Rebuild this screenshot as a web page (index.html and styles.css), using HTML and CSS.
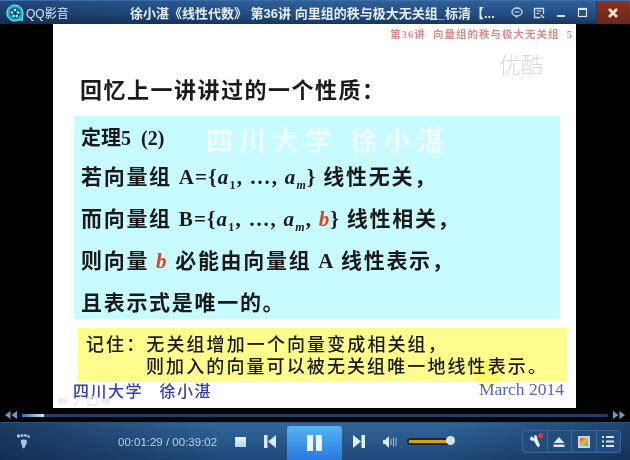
FILE: index.html
```html
<!DOCTYPE html>
<html lang="zh-CN">
<head>
  <meta charset="UTF-8">
  <title>QQ影音</title>
  <link rel="stylesheet" href="styles.css">
</head>
<body>

<div class="player">
  <div class="titlebar">
    <svg class="logo" width="18" height="18" viewBox="0 0 18 18">
      <path d="M9 1a8 8 0 0 1 8 8c0 2-.6 5-.6 7.500L13 15.800A8 8 0 1 1 9 1z" fill="#12b5d6" stroke="#8ff0f5" stroke-width="1"/>
      <circle cx="9" cy="9" r="5.500" fill="#0c4f86"/>
      <circle cx="9" cy="6" r="1.300" fill="#bff"/>
      <circle cx="6" cy="8.500" r="1.300" fill="#bff"/>
      <circle cx="12" cy="8.500" r="1.300" fill="#bff"/>
      <circle cx="7.500" cy="12" r="1.300" fill="#bff"/>
      <circle cx="10.800" cy="12" r="1.300" fill="#bff"/>
    </svg>
    <span class="app-name">QQ影音</span>
    <span class="video-title">徐小湛《线性代数》 第36讲 向里组的秩与极大无关组_标清【...</span>
    <div class="win-btns">
      <svg class="win-btn" width="22" height="22" viewBox="0 0 22 22"><ellipse cx="11" cy="10" rx="5" ry="4" fill="none" stroke="#cfe0f0" stroke-width="1.300"/><path d="M9 14l2 2.500v-2.500z" fill="#cfe0f0"/><path d="M8.500 10h5" stroke="#cfe0f0"/></svg>
      <svg class="win-btn" width="22" height="22" viewBox="0 0 22 22"><path d="M15.500 12V6.500h-9v9h6" fill="none" stroke="#cfe0f0" stroke-width="1.300"/><path d="M8.500 9h5M8.500 11.500h3" stroke="#cfe0f0"/><path d="M13 13l3 3" stroke="#cfe0f0" stroke-width="1.500"/></svg>
      <svg class="win-btn" width="22" height="22" viewBox="0 0 22 22"><rect x="7" y="13" width="8" height="2" fill="#dce8f4"/></svg>
      <svg class="win-btn" width="22" height="22" viewBox="0 0 22 22"><rect x="6.500" y="6.500" width="8" height="8" fill="none" stroke="#dce8f4" stroke-width="1.200"/><path d="M6 7h9" stroke="#dce8f4" stroke-width="2"/></svg>
    </div>
    <div class="close-btn">
      <svg width="12" height="12" viewBox="0 0 12 12"><path d="M2 2l8 8M10 2l-8 8" stroke="#f4e6e0" stroke-width="2.600"/></svg>
    </div>
  </div>

  <div class="video">
    <div class="slide">
      <div class="slide-head">第36讲&nbsp; 向量组的秩与极大无关组&nbsp; 5</div>
      <div class="youku">优酷</div>
      <h2 class="recall">回忆上一讲讲过的一个性质<span class="colon">：</span></h2>
      <div class="theorem">
        <div class="thm-title">定理5 &nbsp;(2)</div>
        <div class="thm-line">若向量组 <span class="math">A={<i>a</i><sub>1</sub>, …, <i>a<sub>m</sub></i>}</span> 线性无关，</div>
        <div class="thm-line">而向量组 <span class="math">B={<i>a</i><sub>1</sub>, …, <i>a<sub>m</sub></i>, <i class="red">b</i>}</span> 线性相关，</div>
        <div class="thm-line">则向量 <i class="red">b</i> 必能由向量组 A 线性表示，</div>
        <div class="thm-line">且表示式是唯一的。</div>
        <div class="watermark">四川大学 徐小湛</div>
      </div>
      <div class="note">
        <div>记住：无关组增加一个向量变成相关组，</div>
        <div class="note-2">则加入的向量可以被无关组唯一地线性表示。</div>
      </div>
      <div class="slide-foot">
        <span class="author">四川大学 &nbsp;&nbsp;徐小湛</span>
        <span class="date">March 2014</span>
      </div>
      <svg class="nav-icons" width="56" height="12" viewBox="0 0 56 12">
        <path d="M1 6l5-5v3h5v4H6v3z" fill="#e8e8e8"/>
        <path d="M18 11l7-10" stroke="#e8e8e8" stroke-width="1.500"/>
        <path d="M32 2h9v8h-9z" fill="none" stroke="#e8e8e8" stroke-width="1.500"/>
        <path d="M55 6l-5-5v3h-5v4h5v3z" fill="#e8e8e8"/>
      </svg>
      <div class="cursor"></div>
    </div>
  </div>

  <div class="seekrow">
    <svg width="14" height="10" viewBox="0 0 14 10"><path d="M6.500 1v8L1 5zM13 1v8L7.500 5z" fill="#6f9bc8"/></svg>
    <div class="seek"><div class="seek-done"></div></div>
    <svg width="14" height="10" viewBox="0 0 14 10"><path d="M1 1v8l5.500-4zM7.500 1v8L13 5z" fill="#6f9bc8"/></svg>
  </div>

  <div class="controls">
    <svg class="feet" width="16" height="17" viewBox="0 0 16 17">
      <path d="M5 7c3-1 6-.5 6 2 0 2-1.500 3-2 5-.4 2-3 1.500-2.800-.5C6.400 11.500 4 10 5 7z" fill="#a9c4dc"/>
      <circle cx="2.500" cy="3" r="1.700" fill="#a9c4dc"/><circle cx="6" cy="2.500" r="1.500" fill="#a9c4dc"/><circle cx="9.500" cy="2.500" r="1.400" fill="#a9c4dc"/><circle cx="12.500" cy="3.500" r="1.300" fill="#a9c4dc"/>
    </svg>
    <span class="time">00:01:29 / 00:39:02</span>
    <div class="stop"></div>
    <svg class="prev" width="12" height="13" viewBox="0 0 12 13"><path d="M0 0h3.500v13H0zM12 0v13L4 6.500z" fill="#d8e8f4"/></svg>
    <div class="play"><span class="bar"></span><span class="bar"></span></div>
    <svg class="next" width="12" height="13" viewBox="0 0 12 13"><path d="M12 0H8.500v13H12zM0 0v13L8 6.500z" fill="#e4eff8"/></svg>
    <svg class="vol" width="14" height="12" viewBox="0 0 14 12"><path d="M0 4h2l4-4v12L2 8H0z" fill="#d8e8f4"/><path d="M8 3v6M10.500 1.500v9M13 2v8" stroke="#a9c4dc"/></svg>
    <div class="volume"><div class="vol-fill"></div><div class="vol-knob"></div></div>
    <div class="tools">
      <div class="tool">
        <svg width="12" height="13" viewBox="0 0 12 13"><path d="M1 3l2-2 1 2 1.500-.500L5 .5c2-1 3.500.5 3 2.500l3 7.500-2 2-4.500-7C2.500 6.500.5 5 1 3z" fill="#e4eff8"/></svg>
        <span class="dot"></span>
      </div>
      <div class="tool"><svg width="12" height="10" viewBox="0 0 12 10"><path d="M6 0l5.500 6H.5zM.5 7.500h11V10H.5z" fill="#d8e8f4"/></svg></div>
      <div class="tool"><div class="palette"></div></div>
      <div class="tool"><svg width="12" height="11" viewBox="0 0 12 11"><path d="M0 0h2v2H0zM4 0h8v2H4zM0 4.500h2v2H0zM4 4.500h8v2H4zM0 9h2v2H0zM4 9h8v2H4z" fill="#d8e8f4"/></svg></div>
    </div>
  </div>
</div>

</body>
</html>
```

FILE: styles.css
```css
html, body {
  margin: 0;
  padding: 0;
  background: #000;
}
.player {
  width: 630px;
  height: 460px;
  display: flex;
  flex-direction: column;
  overflow: hidden;
  font-family: "Liberation Sans", "Noto Sans CJK SC", sans-serif;
}

/* title bar */
.titlebar {
  height: 24px;
  flex: none;
  display: flex;
  align-items: center;
  background:
    linear-gradient(90deg, rgba(10, 25, 55, 0.35), rgba(10, 25, 55, 0) 40%),
    linear-gradient(#2f5f9a, #214c80 60%, #17365e);
  border-top: 1px solid #3b6ca6;
  box-sizing: border-box;
  color: #dbe8f4;
}
.logo {
  margin-left: 6px;
  flex: none;
}
.app-name {
  margin-left: 2px;
  font-size: 12px;
  width: 104px;
  flex: none;
}
.video-title {
  width: 375px;
  flex: none;
  font-size: 13px;
  font-weight: bold;
  white-space: nowrap;
  overflow: hidden;
  color: #e6eff8;
}
.win-btns {
  display: flex;
  flex: 1;
  justify-content: flex-end;
  gap: 0;
}
.win-btn {
  width: 22px;
  height: 22px;
}
.close-btn {
  width: 32px;
  height: 23px;
  margin-right: 1px;
  margin-left: 2px;
  flex: none;
  display: flex;
  align-items: center;
  justify-content: center;
  background: linear-gradient(#8a3220, #6e2616);
  border-left: 1px solid #1b3a63;
}

/* video area */
.video {
  height: 384px;
  flex: none;
  background: #000;
  padding-left: 53px;
  overflow: hidden;
}
.slide {
  position: relative;
  width: 523px;
  height: 384px;
  box-sizing: border-box;
  background: #fff;
  padding: 1px 0 0 21px;
  color: #1a1a1a;
  font-family: "Liberation Serif", "Noto Sans CJK SC", serif;
}
.slide-head {
  position: absolute;
  top: 4px;
  right: 3px;
  font-size: 10.500px;
  line-height: 13px;
  letter-spacing: 1px;
  color: #dd8a8e;
  font-weight: bold;
  white-space: nowrap;
  filter: blur(0.4px);
}
.youku {
  position: absolute;
  top: 26px;
  left: 446px;
  font-size: 22px;
  line-height: 26px;
  color: #d9d9d9;
  font-family: "Noto Sans CJK SC", sans-serif;
  font-weight: 300;
}
.recall {
  margin: 49px 0 0 6px;
  height: 28px;
  font-size: 22px;
  line-height: 28px;
  font-weight: bold;
  letter-spacing: 1.500px;
  filter: blur(0.4px);
}
.colon {
  font-family: "Noto Sans CJK TC", sans-serif;
}
.theorem {
  position: relative;
  margin-top: 14px;
  width: 486px;
  height: 203px;
  box-sizing: border-box;
  padding: 8px 0 0 7px;
  background: #c8fbff;
  font-size: 21px;
  font-weight: bold;
}
.thm-title {
  height: 32px;
  line-height: 28px;
  font-size: 20px;
  filter: blur(0.4px);
}
.thm-line {
  height: 42px;
  line-height: 42px;
  letter-spacing: 1.700px;
  white-space: nowrap;
  filter: blur(0.4px);
}
.thm-line sub {
  font-size: 12px;
  line-height: 0;
}
.math {
  letter-spacing: 1.200px;
}
.red {
  color: #e0401a;
}
.watermark {
  position: absolute;
  top: 9px;
  left: 132px;
  font-size: 27px;
  line-height: 34px;
  letter-spacing: 6px;
  color: #edfcfd;
  font-weight: bold;
  white-space: nowrap;
  filter: blur(0.5px);
}
.note {
  margin: 9px 0 0 4px;
  width: 489px;
  height: 54px;
  box-sizing: border-box;
  padding: 6px 0 0 8px;
  background: #fdfc8c;
  font-size: 18px;
  line-height: 22px;
  letter-spacing: 2.100px;
  font-weight: 500;
  white-space: nowrap;
  filter: blur(0.4px);
}
.note-2 {
  padding-left: 60px;
}
.slide-foot {
  display: flex;
  justify-content: space-between;
  padding-right: 12px;
  height: 22px;
  line-height: 22px;
}
.author {
  color: #3340b0;
  font-size: 16px;
  font-weight: 500;
  letter-spacing: 1.500px;
  margin-left: -1px;
  margin-top: -1px;
  filter: blur(0.4px);
}
.date {
  color: #5a62c0;
  font-size: 17.500px;
  margin-top: -4px;
  filter: blur(0.3px);
}
.nav-icons {
  position: absolute;
  left: 3px;
  bottom: 1px;
}
.cursor {
  position: absolute;
  left: 421px;
  top: 336px;
  width: 28px;
  height: 28px;
  border-radius: 50%;
  background: rgba(253, 250, 120, 0.5);
  mix-blend-mode: multiply;
}

/* seek row */
.seekrow {
  height: 14px;
  flex: none;
  display: flex;
  align-items: center;
  gap: 4px;
  padding: 0 4px;
  background: #000;
}
.seek {
  flex: 1;
  height: 3px;
  background: #1f4066;
  border-radius: 2px;
}
.seek-done {
  width: 22px;
  height: 3px;
  background: linear-gradient(90deg, #2f6db0, #d0eaf8);
}

/* control bar */
.controls {
  flex: 1;
  display: flex;
  align-items: center;
  border-top: 1px solid #2a5484;
  background:
    linear-gradient(90deg, rgba(10, 25, 55, 0.55), rgba(10, 25, 55, 0) 35%, rgba(10, 25, 55, 0) 70%, rgba(10, 25, 55, 0.45)),
    linear-gradient(#326599, #1f4878);
  color: #b9d3ea;
}
.feet {
  margin-left: 16px;
}
.time {
  margin-left: 86px;
  width: 117px;
  flex: none;
  font-size: 11.500px;
  white-space: nowrap;
}
.stop {
  width: 11px;
  height: 10px;
  background: linear-gradient(#e8f2fa, #b8d4ea);
}
.prev {
  margin-left: 18px;
}
.play {
  margin-left: 11px;
  width: 55px;
  height: 34px;
  margin-top: 3px;
  display: flex;
  justify-content: center;
  align-items: center;
  gap: 3px;
  border-radius: 3px 3px 0 0;
  background: linear-gradient(#55b4f4, #2a78e0);
}
.bar {
  width: 6px;
  height: 16px;
  background: #eaf5fd;
}
.next {
  margin-left: 11px;
}
.vol {
  margin-left: 18px;
}
.volume {
  position: relative;
  margin-left: 10px;
  width: 42px;
  height: 5px;
  background: #14304f;
  border: 1px solid #0f2846;
  border-radius: 3px;
}
.vol-fill {
  width: 38px;
  height: 3px;
  margin: 1px;
  background: #d9a20f;
}
.vol-knob {
  position: absolute;
  top: -3px;
  right: -5px;
  width: 9px;
  height: 9px;
  border-radius: 50%;
  background: #d2e4f2;
}
.tools {
  margin-left: 71px;
  width: 99px;
  box-sizing: border-box;
  display: flex;
  border: 1px solid #3a689c;
  border-radius: 3px;
  background: #234b7c;
}
.tool {
  position: relative;
  flex: 1;
  height: 21px;
  display: flex;
  align-items: center;
  justify-content: center;
  border-left: 1px solid #3a689c;
}
.tool:first-child {
  border-left: none;
}
.dot {
  position: absolute;
  top: 2px;
  right: 4px;
  width: 5px;
  height: 5px;
  border-radius: 50%;
  background: #ee3040;
}
.palette {
  width: 8px;
  height: 8px;
  border: 2px solid #c5d8e8;
  background: linear-gradient(135deg, #e04040, #e0c040 50%, #40a0e0);
}
```
